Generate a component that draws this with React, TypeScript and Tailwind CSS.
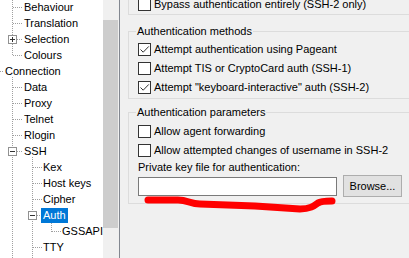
import type { ReactNode } from "react";

const tree = [
  { label: "Behaviour", x: 24 },
  { label: "Translation", x: 24 },
  { label: "Selection", x: 24 },
  { label: "Colours", x: 24 },
  { label: "Connection", x: 5 },
  { label: "Data", x: 24 },
  { label: "Proxy", x: 24 },
  { label: "Telnet", x: 24 },
  { label: "Rlogin", x: 24 },
  { label: "SSH", x: 24 },
  { label: "Kex", x: 43 },
  { label: "Host keys", x: 43 },
  { label: "Cipher", x: 43 },
  { label: "Auth", x: 43, selected: true },
  { label: "GSSAPI", x: 62 },
  { label: "TTY", x: 43 },
];

const rowY = (i: number) => 7.5 + 16 * i;

function TreeLines() {
  const dot = { stroke: "#a0a0a0", strokeWidth: 1, strokeDasharray: "1 1", shapeRendering: "crispEdges" as const };
  const h1 = [0, 1, 3, 5, 6, 7, 8];
  const h2 = [10, 11, 12, 15];
  return (
    <svg className="absolute left-0 top-0" width="103" height="258">
      <line x1="12.5" y1="0" x2="12.5" y2={rowY(3)} {...dot} />
      <line x1="0" y1={rowY(4)} x2="4" y2={rowY(4)} {...dot} />
      <line x1="12.5" y1={rowY(4) + 5} x2="12.5" y2="258" {...dot} />
      {h1.map((i) => (
        <line key={i} x1="13" y1={rowY(i)} x2="23" y2={rowY(i)} {...dot} />
      ))}
      <line x1="17" y1={rowY(2)} x2="23" y2={rowY(2)} {...dot} />
      <line x1="17" y1={rowY(9)} x2="23" y2={rowY(9)} {...dot} />
      <line x1="32.5" y1={rowY(9) + 5} x2="32.5" y2="258" {...dot} />
      {h2.map((i) => (
        <line key={i} x1="33" y1={rowY(i)} x2="42" y2={rowY(i)} {...dot} />
      ))}
      <line x1="37" y1={rowY(13)} x2="41" y2={rowY(13)} {...dot} />
      <line x1="51.5" y1={rowY(13) + 5} x2="51.5" y2={rowY(14)} {...dot} />
      <line x1="52" y1={rowY(14)} x2="61" y2={rowY(14)} {...dot} />
      {/* expanders */}
      <g shapeRendering="crispEdges">
        <rect x="8.5" y={rowY(2) - 4} width="8" height="8" fill="#fff" stroke="#919191" />
        <line x1="10" y1={rowY(2)} x2="15" y2={rowY(2)} stroke="#333" />
        <line x1="12.5" y1={rowY(2) - 2.5} x2="12.5" y2={rowY(2) + 2.5} stroke="#333" />
        <rect x="8.5" y={rowY(9) - 4} width="8" height="8" fill="#fff" stroke="#919191" />
        <line x1="10" y1={rowY(9)} x2="15" y2={rowY(9)} stroke="#333" />
        <rect x="28.5" y={rowY(13) - 4} width="8" height="8" fill="#fff" stroke="#919191" />
        <line x1="30" y1={rowY(13)} x2="35" y2={rowY(13)} stroke="#333" />
      </g>
    </svg>
  );
}

function Check({ checked, children }: { checked?: boolean; children: ReactNode }) {
  return (
    <div className="flex h-[19px] items-center gap-[3px]">
      <div className="flex h-[13px] w-[13px] items-center justify-center border border-[#333] bg-white">
        {checked && (
          <svg width="11" height="11" viewBox="0 0 11 11">
            <path d="M1.5 5.5 L4.2 8.2 L9.8 2.4" fill="none" stroke="#333" strokeWidth="1" />
          </svg>
        )}
      </div>
      <span className="whitespace-nowrap">{children}</span>
    </div>
  );
}

function Group({ label, className, children }: { label?: string; className: string; children: ReactNode }) {
  return (
    <div className={`relative w-[320px] border border-[#dcdcdc] pl-[9px] ${className}`}>
      {label && (
        <span className="absolute left-[7px] top-[-8px] bg-[#f0f0f0] px-[1px] leading-[14px] whitespace-nowrap">
          {label}
        </span>
      )}
      {children}
    </div>
  );
}

export default function App() {
  return (
    <div className="relative flex h-[258px] w-[409px] overflow-hidden bg-[#f0f0f0] font-['Liberation_Sans',Arial,sans-serif] text-[11px] text-black">
      <div className="relative h-full w-[103px] bg-white">
        <TreeLines />
        <div className="relative mt-[-1px] flex flex-col">
          {tree.map((t) => (
            <div key={t.label} className="flex h-4 items-center whitespace-nowrap" style={{ paddingLeft: t.x - (t.selected ? 2 : 0) }}>
              {t.selected ? (
                <span className="flex h-[15px] items-center bg-[#0078d7] px-[2px] text-white">{t.label}</span>
              ) : (
                <span>{t.label}</span>
              )}
            </div>
          ))}
        </div>
      </div>

      <div className="flex h-full w-[16px] flex-col bg-[#f0f0f0]">
        <div className="mt-[20px] h-[208px] w-[15px] bg-[#cdcdcd]" />
      </div>
      <div className="h-full w-[1px] bg-[#828790]" />

      <div className="flex flex-1 flex-col overflow-hidden pl-[8px]">
        <Group className="mt-[-20px] h-[35px] pt-[14px]">
          <Check>Bypass authentication entirely (SSH-2 only)</Check>
        </Group>

        <Group label="Authentication methods" className="mt-[16px] pt-[8px] pb-[1px]">
          <Check checked>Attempt authentication using Pageant</Check>
          <Check>Attempt TIS or CryptoCard auth (SSH-1)</Check>
          <Check checked>Attempt "keyboard-interactive" auth (SSH-2)</Check>
        </Group>

        <Group label="Authentication parameters" className="mt-[13px] pt-[9px] pb-[6px]">
          <Check>Allow agent forwarding</Check>
          <Check>Allow attempted changes of username in SSH-2</Check>
          <div className="flex h-[14px] items-center whitespace-nowrap">Private key file for authentication:</div>
          <div className="mt-[1px] flex items-center gap-[6px]">
            <div className="h-[19px] w-[199px] border border-[#7a7a7a] bg-white" />
            <button className="flex h-[22px] w-[59px] items-center justify-center border border-[#adadad] bg-[#e1e1e1]">
              Browse...
            </button>
          </div>
        </Group>
      </div>

      <svg className="pointer-events-none absolute left-0 top-0" width="409" height="258">
        <path
          d="M148 200 L178 200 C188 200 190 204 200 204 L255 206 L300 209 C310 209 314 206 318 203 C321 201 326 201 332 201"
          fill="none"
          stroke="#ff0000"
          strokeWidth="7"
          strokeLinecap="round"
          strokeLinejoin="round"
        />
      </svg>
    </div>
  );
}
